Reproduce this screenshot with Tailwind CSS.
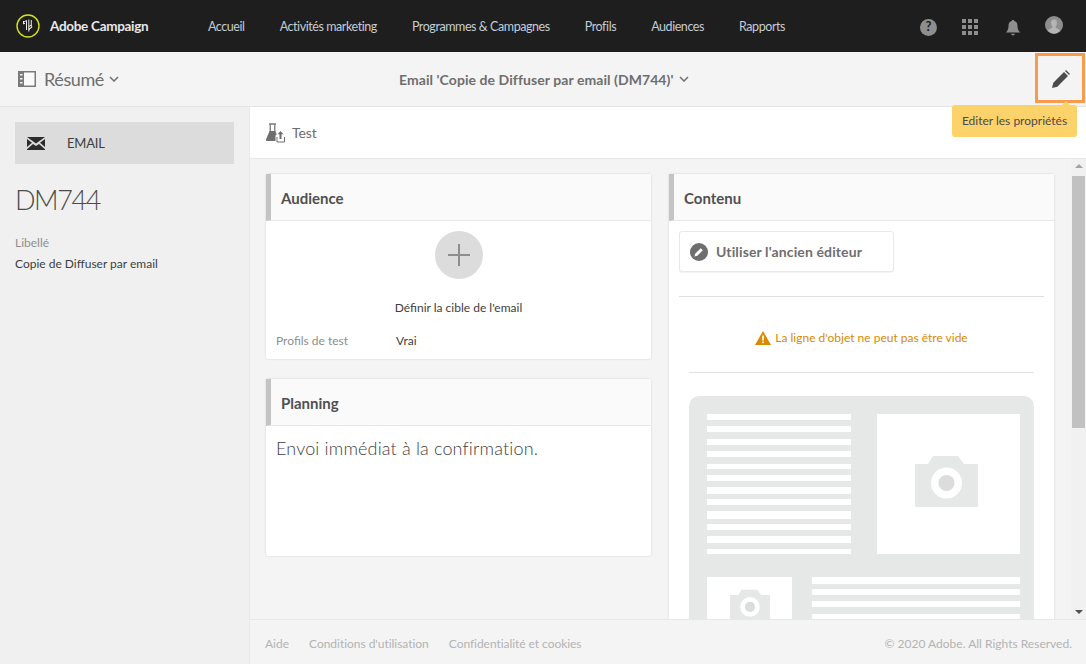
<!DOCTYPE html>
<html lang="fr">
<head>
    <meta charset="UTF-8">
    <title>Adobe Campaign</title>
    <script src="https://cdn.jsdelivr.net/npm/@tailwindcss/browser@4"></script>
</head>
<body class="font-['Lato','Noto_Sans',sans-serif] text-[#4b4b4b] overflow-hidden">
<div class="relative h-[664px] w-[1086px] flex flex-col overflow-hidden bg-[#f4f4f4]">
    <!-- Top nav -->
    <header class="h-[52px] shrink-0 bg-[#1e1e1e] flex items-center">
        <svg class="ml-[16px] w-[24px] h-[24px]" viewBox="0 0 24 24" fill="none">
            <circle cx="12" cy="12" r="11" stroke="#d4e21a" stroke-width="1.400"/>
            <path d="M7 8.500l3.500-2M7.500 7v3l1.500-.8M10.500 6.500v9.500M12.800 5.500v12M15.300 6v7.500l-2.500 2.500M12.800 12.500l2.500-1.500M12.800 15l3.500-2" stroke="#ecece0" stroke-width="1"/>
        </svg>
        <span class="ml-[10px] w-[98px] text-[13.5px] tracking-[-0.3px] font-bold text-[#e8e8e8] whitespace-nowrap">Adobe Campaign</span>
        <nav class="ml-[60px] pt-[2px] flex gap-[35px] text-[12.5px] tracking-[-0.43px] text-[#c4ccd4] whitespace-nowrap">
            <a>Accueil</a>
            <a>Activités marketing</a>
            <a>Programmes &amp; Campagnes</a>
            <a>Profils</a>
            <a>Audiences</a>
            <a>Rapports</a>
        </nav>
        <div class="ml-auto flex items-center text-[#8e8e8e]">
            <div class="mt-[2px] w-[17px] h-[17px] rounded-full bg-[#8e8e8e] text-[#1e1e1e] text-[13px] font-bold flex items-center justify-center">?</div>
            <svg class="ml-[25px] mt-[1px] w-[16px] h-[16px]" viewBox="0 0 16 16" fill="#8e8e8e">
                <rect x="0" y="0" width="4" height="4"/><rect x="6" y="0" width="4" height="4"/><rect x="12" y="0" width="4" height="4"/>
                <rect x="0" y="6" width="4" height="4"/><rect x="6" y="6" width="4" height="4"/><rect x="12" y="6" width="4" height="4"/>
                <rect x="0" y="12" width="4" height="4"/><rect x="6" y="12" width="4" height="4"/><rect x="12" y="12" width="4" height="4"/>
            </svg>
            <svg class="ml-[27px] mt-[3px] w-[16px] h-[18px]" viewBox="0 0 16 20" fill="#8e8e8e">
                <path d="M8 1c1 0 1.400.6 1.500 1.300C12 3 13 5 13 8c0 3 1 5 3 7H0c2-2 3-4 3-7 0-3 1-5 3.500-5.700C6.600 1.600 7 1 8 1zM6 16.500h4c0 1-1 1.800-2 1.800s-2-.8-2-1.800z"/>
            </svg>
            <svg class="ml-[24px] mr-[23px] w-[18px] h-[18px] -mt-[3px]" viewBox="0 0 18 18">
                <circle cx="9" cy="9" r="9" fill="#8e8e8e"/>
                <path d="M9 3.500c2 0 3 1.500 3 3.500s-1 3-1.500 3.500v1L15 14c-1.500 2.500-3.500 3.500-6 3.500S4.500 16.500 3 14l4.500-2.500v-1C7 10 6 9 6 7s1-3.500 3-3.500z" fill="#b5b5b5"/>
            </svg>
        </div>
    </header>

    <!-- Sub header -->
    <div class="h-[55px] shrink-0 bg-[#f4f4f4] border-b border-[#e4e4e4] flex items-center relative">
        <div class="flex items-center pl-[18px] w-[250px] text-[#6e6e6e]">
            <svg class="w-[18px] h-[16px]" viewBox="0 0 18 16" fill="none">
                <rect x="0.750" y="0.750" width="16.500" height="14.500" fill="#fafafa" stroke="#7a7a7a" stroke-width="1.500"/>
                <rect x="1" y="1" width="5" height="14" fill="#7a7a7a"/>
                <rect x="2" y="3" width="2.500" height="1.500" fill="#f4f4f4"/><rect x="2" y="7" width="2.500" height="1.500" fill="#f4f4f4"/><rect x="2" y="11" width="2.500" height="1.500" fill="#f4f4f4"/>
            </svg>
            <span class="ml-[8px] text-[18px] tracking-[-0.4px]">Résumé</span>
            <svg class="ml-[5px] w-[10px] h-[6px]" viewBox="0 0 10 6" fill="none"><path d="M1 1l4 4 4-4" stroke="#6e6e6e" stroke-width="1.500"/></svg>
        </div>
        <div class="ml-[149px] flex items-center text-[14px] tracking-[0.07px] font-bold text-[#6e6e6e] whitespace-nowrap">
            <span>Email 'Copie de Diffuser par email (DM744)'</span>
            <svg class="ml-[5px] w-[10px] h-[6px]" viewBox="0 0 10 6" fill="none"><path d="M1 1l4 4 4-4" stroke="#6e6e6e" stroke-width="1.500"/></svg>
        </div>
    </div>

    <!-- Body -->
    <div class="flex-1 flex min-h-0">
        <aside class="w-[250px] shrink-0 bg-[#f0f0f0] border-r border-[#e8e8e8] px-[15px] pt-[15px]">
            <div class="h-[42px] w-[219px] bg-[#dcdcdc] flex items-center pl-[12px]">
                <svg class="w-[18px] h-[13px]" viewBox="0 0 18 13" fill="#2c2c2c">
                    <path d="M0 0h18L9 6.500z"/>
                    <path d="M0 2l5 3.800L0 10zM18 2l-5 3.800L18 10zM0 12.200l6-5.300L9 9l3-2.100 6 5.300V13H0z"/>
                </svg>
                <span class="ml-[22px] mt-[2px] text-[13px] tracking-[-0.2px] text-[#3e3e3e]">EMAIL</span>
            </div>
            <h1 class="mt-[18px] text-[27px] tracking-[-1.4px] leading-[36px] font-light text-[#4b4b4b]">DM744</h1>
            <p class="mt-[16px] text-[12px] leading-[18px] text-[#8e8e8e]">Libellé</p>
            <p class="mt-[3px] text-[12px] leading-[18px] text-[#3e3e3e]">Copie de Diffuser par email</p>
        </aside>

        <main class="flex-1 flex flex-col min-w-0">
            <div class="h-[52px] shrink-0 bg-white border-b border-[#e8e8e8] flex items-center pl-[16px]">
                <svg class="w-[20px] h-[20px]" viewBox="0 0 20 20">
                    <path d="M3 1h7" stroke="#6e6e6e" stroke-width="1.400"/>
                    <path d="M4.200 1.500v7M8.800 1.500v7" stroke="#6e6e6e" stroke-width="1.200"/>
                    <path d="M3.600 8h5.800l1.300 3.500-1.200 1V18H1a1 1 0 0 1-1-1.500z" fill="#6e6e6e"/>
                    <path d="M14.500 8l3 3.200h-2V16h-2v-4.800h-2z" fill="#6e6e6e"/>
                    <path d="M11 14v5h7.500v-5" fill="none" stroke="#6e6e6e" stroke-width="1"/>
                </svg>
                <span class="ml-[6px] text-[14px] tracking-[-0.1px] text-[#6e6e6e]">Test</span>
            </div>

            <div class="flex-1 min-h-0 flex overflow-hidden">
                <div class="flex-1 flex gap-[18px] pl-[16px] pt-[15px] min-w-0 overflow-hidden">
                    <!-- Left column -->
                    <div class="w-[385px] shrink-0 flex flex-col gap-[20px]">
                        <section class="h-[185px] bg-white rounded-[2px] shadow-[0_0_2px_rgba(0,0,0,0.18)]">
                            <div class="h-[47px] bg-[#fafafa] border-b border-[#e8e8e8] border-l-[5px] border-l-[#c4c4c4] flex items-center pl-[10px] pt-[2px] text-[15px] font-bold text-[#505050]">Audience</div>
                            <div class="flex flex-col items-center pt-[10px]">
                                <div class="w-[48px] h-[48px] rounded-full bg-[#dcdcdc] flex items-center justify-center">
                                    <svg class="w-[22px] h-[22px]" viewBox="0 0 22 22" fill="#8e8e8e"><rect x="10" y="0" width="2" height="22"/><rect x="0" y="10" width="22" height="2"/></svg>
                                </div>
                                <p class="mt-[20px] text-[12px] leading-[18px] text-[#3e3e3e]">Définir la cible de l'email</p>
                            </div>
                            <div class="mt-[15px] flex pl-[10px] text-[12px] leading-[18px]">
                                <span class="w-[120px] text-[#8e8e8e]">Profils de test</span>
                                <span class="text-[#3e3e3e]">Vrai</span>
                            </div>
                        </section>
                        <section class="h-[177px] bg-white rounded-[2px] shadow-[0_0_2px_rgba(0,0,0,0.18)]">
                            <div class="h-[47px] bg-[#fafafa] border-b border-[#e8e8e8] border-l-[5px] border-l-[#c4c4c4] flex items-center pl-[10px] pt-[2px] text-[15px] font-bold text-[#505050]">Planning</div>
                            <p class="mt-[9px] pl-[10px] text-[18px] tracking-[0.16px] leading-[26px] font-light text-[#3e3e3e]">Envoi immédiat à la confirmation.</p>
                        </section>
                    </div>

                    <!-- Right column -->
                    <section class="w-[385px] shrink-0 h-[600px] bg-white rounded-[2px] shadow-[0_0_2px_rgba(0,0,0,0.18)]">
                        <div class="h-[47px] bg-[#fafafa] border-b border-[#e8e8e8] border-l-[5px] border-l-[#c4c4c4] flex items-center pl-[10px] pt-[2px] text-[15px] font-bold text-[#505050]">Contenu</div>
                        <div class="px-[10px] pt-[10px]">
                            <div class="w-[215px] h-[41px] bg-white border border-[#e8e8e8] rounded-[3px] shadow-[0_1px_1px_rgba(0,0,0,0.05)] flex items-center pl-[10px]">
                                <svg class="w-[18px] h-[18px]" viewBox="0 0 18 18">
                                    <circle cx="9" cy="9" r="9" fill="#6e6e6e"/>
                                    <path d="M4.500 13.500l.7-2.800 5.500-5.500 2.100 2.100-5.500 5.500z" fill="#fff"/>
                                </svg>
                                <span class="ml-[8px] text-[14px] tracking-[0.12px] font-bold text-[#6e6e6e] whitespace-nowrap">Utiliser l'ancien éditeur</span>
                            </div>
                            <div class="mt-[24px] border-t border-[#e0e0e0]"></div>
                            <div class="h-[75px] pt-[6px] flex items-center justify-center">
                                <svg class="w-[16px] h-[14px]" viewBox="0 0 16 14">
                                    <path d="M8 0l8 14H0z" fill="#d98a00"/>
                                    <rect x="7.200" y="4.500" width="1.600" height="5" fill="#fff"/><rect x="7.200" y="10.500" width="1.600" height="1.600" fill="#fff"/>
                                </svg>
                                <span class="ml-[4px] text-[12px] text-[#d98a00] whitespace-nowrap">La ligne d'objet ne peut pas être vide</span>
                            </div>
                            <div class="mx-[10px] border-t border-[#e0e0e0]"></div>

                            <!-- Template preview -->
                            <div class="mx-[10px] mt-[23px] h-[300px] bg-[#e6e7e7] rounded-t-[10px] pl-[18px] pr-[14px] pt-[18px]">
                                <div class="flex justify-between">
                                    <div class="w-[144px]">
                                        <div class="h-[6px] mb-[6px] bg-white"></div>
                                        <div class="h-[6px] mb-[7px] bg-white"></div>
                                        <div class="h-[6px] mb-[6px] bg-white"></div>
                                        <div class="h-[6px] mb-[7px] bg-white"></div>
                                        <div class="h-[5px] mb-[6px] bg-white"></div>
                                        <div class="h-[6px] mb-[6px] bg-white"></div>
                                        <div class="h-[7px] mb-[5px] bg-white"></div>
                                        <div class="h-[6px] mb-[6px] bg-white"></div>
                                        <div class="h-[8px] mb-[5px] bg-white"></div>
                                        <div class="h-[6px] mb-[6px] bg-white"></div>
                                        <div class="h-[7px] mb-[6px] bg-white"></div>
                                        <div class="h-[5px] bg-white"></div>
                                    </div>
                                    <div class="w-[143px] h-[140px] bg-white flex items-center justify-center">
                                        <svg class="w-[63px] h-[51px] -mt-[5px] -ml-[4px]" viewBox="0 0 63 51">
                                            <path d="M1 8h12l5-8h25l6 8h13a1 1 0 0 1 1 1v41a1 1 0 0 1-1 1H1a1 1 0 0 1-1-1V9a1 1 0 0 1 1-1z" fill="#e6e7e7"/>
                                            <circle cx="31.500" cy="27" r="15.500" fill="#fff"/>
                                            <circle cx="31.500" cy="27" r="8" fill="#dcdcdc"/>
                                        </svg>
                                    </div>
                                </div>
                                <div class="mt-[23px] flex gap-[20px]">
                                    <div class="w-[85px] h-[60px] bg-white flex justify-center pt-[12px]">
                                        <svg class="w-[40px] h-[34px]" viewBox="0 0 63 51">
                                            <path d="M1 8h12l5-8h25l6 8h13a1 1 0 0 1 1 1v41a1 1 0 0 1-1 1H1a1 1 0 0 1-1-1V9a1 1 0 0 1 1-1z" fill="#e6e7e7"/>
                                            <circle cx="31.500" cy="27" r="15.500" fill="#fff"/>
                                            <circle cx="31.500" cy="27" r="8" fill="#dcdcdc"/>
                                        </svg>
                                    </div>
                                    <div class="w-[208px]">
                                        <div class="h-[7px] mb-[5px] bg-white"></div>
                                        <div class="h-[6px] mb-[6px] bg-white"></div>
                                        <div class="h-[6px] mb-[7px] bg-white"></div>
                                        <div class="h-[6px] bg-white"></div>
                                    </div>
                                </div>
                            </div>
                        </div>
                    </section>
                </div>

                <!-- Scrollbar -->
                <div class="w-[15px] shrink-0 mr-0 bg-[#f1f1f1] flex flex-col items-center justify-between py-[5px]">
                    <div class="w-0 h-0 border-x-[4px] border-x-transparent border-b-[4px] border-b-[#a3a3a3]"></div>
                    <div class="absolute top-[176px] right-[1px] w-[13px] h-[252px] bg-[#c1c1c1]"></div>
                    <div class="w-0 h-0 border-x-[4px] border-x-transparent border-t-[4px] border-t-[#505050]"></div>
                </div>
            </div>

            <footer class="h-[45px] shrink-0 bg-[#f4f4f4] border-t border-[#e8e8e8] flex items-center px-[15px] pt-[3px] text-[12px] text-[#b3b3b3] whitespace-nowrap">
                <a>Aide</a>
                <a class="ml-[20px] tracking-[-0.03px]">Conditions d'utilisation</a>
                <a class="ml-[20px] tracking-[-0.05px]">Confidentialité et cookies</a>
                <span class="ml-auto -mr-[1px]">© 2020 Adobe. All Rights Reserved.</span>
            </footer>
        </main>
    </div>

    <!-- Highlight around edit button -->
    <div class="absolute left-[1035px] top-[53px] w-[50px] h-[50px] border-[3px] border-[#f99b4c] flex items-center justify-center">
        <svg class="ml-[2px] mt-[1px] w-[18px] h-[18px]" viewBox="0 0 18 18" fill="#4b4b4b">
            <path d="M0 18l1.300-5.300L12 2l4 4L5.300 16.700z"/>
            <path d="M13 1l1-1 4 4-1 1z"/>
        </svg>
    </div>
    <!-- Tooltip -->
    <div class="absolute left-[952px] top-[105px] w-[125px] h-[32px] bg-[#fcd26b] rounded-[3px] flex items-center justify-center text-[12px] text-[#4b4b4b] whitespace-nowrap">
        <div class="absolute -top-[4px] left-[110px] w-0 h-0 border-x-[4px] border-x-transparent border-b-[4px] border-b-[#fcd26b]"></div>
        Editer les propriétés
    </div>
</div>
</body>
</html>
